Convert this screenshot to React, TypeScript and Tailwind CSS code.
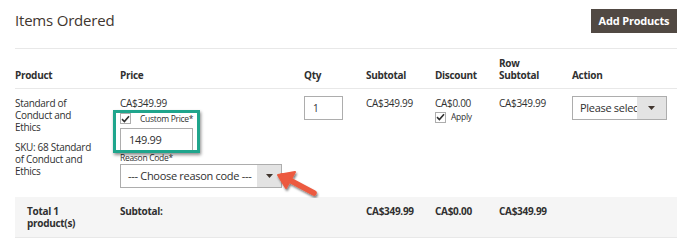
const cols = 'grid grid-cols-[105px_184px_62px_69px_64px_73px_105px]';

function Check() {
  return (
    <span className="w-[11px] h-[11px] border border-[#adadad] bg-white flex items-center justify-center shrink-0">
      <svg width="9" height="8" viewBox="0 0 9 8">
        <path d="M1 4.2 L3.4 6.5 L8 1.2" stroke="#303030" strokeWidth="1.6" fill="none" />
      </svg>
    </span>
  );
}

function Caret() {
  return (
    <svg width="7" height="4" viewBox="0 0 7 4">
      <path d="M0 0 H7 L3.5 4 Z" fill="#41362f" />
    </svg>
  );
}

export default function App() {
  return (
    <div className="w-[688px] h-[243px] bg-white relative overflow-hidden text-[#303030] font-['Open_Sans',sans-serif] text-[10px] leading-[12px] tracking-[-0.3px]">
      <div className="flex justify-between items-start pl-[15px] pr-[11px] pt-[9px] h-[48px]">
        <h1 className="text-[15px] leading-[22px] font-normal text-[#41362f] tracking-[-0.2px]">Items Ordered</h1>
        <button className="h-[24px] w-[86px] bg-[#514943] text-white font-bold text-[11px] tracking-[-0.2px]">Add Products</button>
      </div>

      <div className="ml-[15px] w-[662px]">
        <div className={`${cols} border-t border-b border-[#e8e8e8] h-[41px] items-end pb-[7px] font-bold`}>
          <div>Product</div>
          <div>Price</div>
          <div>Qty</div>
          <div>Subtotal</div>
          <div>Discount</div>
          <div>Row<br />Subtotal</div>
          <div>Action</div>
        </div>

        <div className={`${cols} h-[108px] pt-[8px]`}>
          <div>
            <div>Standard of<br />Conduct and<br />Ethics</div>
            <div className="mt-[8px]">SKU: 68 Standard<br />of Conduct and<br />Ethics</div>
          </div>
          <div className="relative">
            <div>CA$349.99</div>
            <div className="flex items-center gap-[9px] mt-[4px] h-[11px]">
              <Check />
              <span className="text-[8.5px]">Custom Price*</span>
            </div>
            <div className="mt-[4px] w-[73px] h-[24px] border border-[#adadad] flex items-center pl-[8px] text-[11px]">149.99</div>
            <div className="text-[8.5px] leading-[10px] mt-[1px]">Reason Code*</div>
            <div className="mt-[1px] w-[162px] h-[24px] border border-[#adadad] flex">
              <div className="flex-1 flex items-center pl-[7px] text-[11px] whitespace-nowrap">--- Choose reason code ---</div>
              <div className="w-[24px] bg-[#e3e3e3] flex items-center justify-center"><Caret /></div>
            </div>
            <div className="absolute left-[-7px] top-[13px] w-[87px] h-[43px] border-[3px] border-[#1fa58c] shadow-[1px_2px_3px_rgba(0,0,0,0.45)]" />
          </div>
          <div>
            <div className="w-[39px] h-[24px] border border-[#adadad] flex items-center pl-[8px] -mt-[1px]">1</div>
          </div>
          <div>CA$349.99</div>
          <div>
            <div>CA$0.00</div>
            <div className="flex items-center gap-[5px] mt-[2px]">
              <Check />
              <span className="text-[8.5px]">Apply</span>
            </div>
          </div>
          <div>CA$349.99</div>
          <div>
            <div className="w-[95px] h-[24px] border border-[#adadad] flex -mt-[1px]">
              <div className="flex-1 overflow-hidden whitespace-nowrap pl-[7px] flex items-center text-[11px]">Please select</div>
              <div className="w-[29px] bg-[#e3e3e3] flex items-center justify-center"><Caret /></div>
            </div>
          </div>
        </div>

        <div className={`${cols} bg-[#f5f5f5] border-b border-[#e8e8e8] h-[41px] pt-[8px] font-bold`}>
          <div className="pl-[12px]">Total 1<br />product(s)</div>
          <div>Subtotal:</div>
          <div />
          <div>CA$349.99</div>
          <div>CA$0.00</div>
          <div>CA$349.99</div>
          <div />
        </div>
      </div>

      <svg className="absolute left-[270px] top-[165px]" width="56" height="40" viewBox="0 0 56 40">
        <defs>
          <filter id="sh" x="-20%" y="-20%" width="140%" height="140%">
            <feDropShadow dx="1" dy="2" stdDeviation="1.2" floodColor="#000" floodOpacity="0.5" />
          </filter>
        </defs>
        <g filter="url(#sh)">
          <path d="M12 11 L44 28" stroke="#ec5a3f" strokeWidth="5.5" strokeLinecap="round" />
          <path d="M8 10 L25 7 L16 23 Z" fill="#ec5a3f" stroke="#ec5a3f" strokeWidth="2" strokeLinejoin="round" />
        </g>
      </svg>
    </div>
  );
}
